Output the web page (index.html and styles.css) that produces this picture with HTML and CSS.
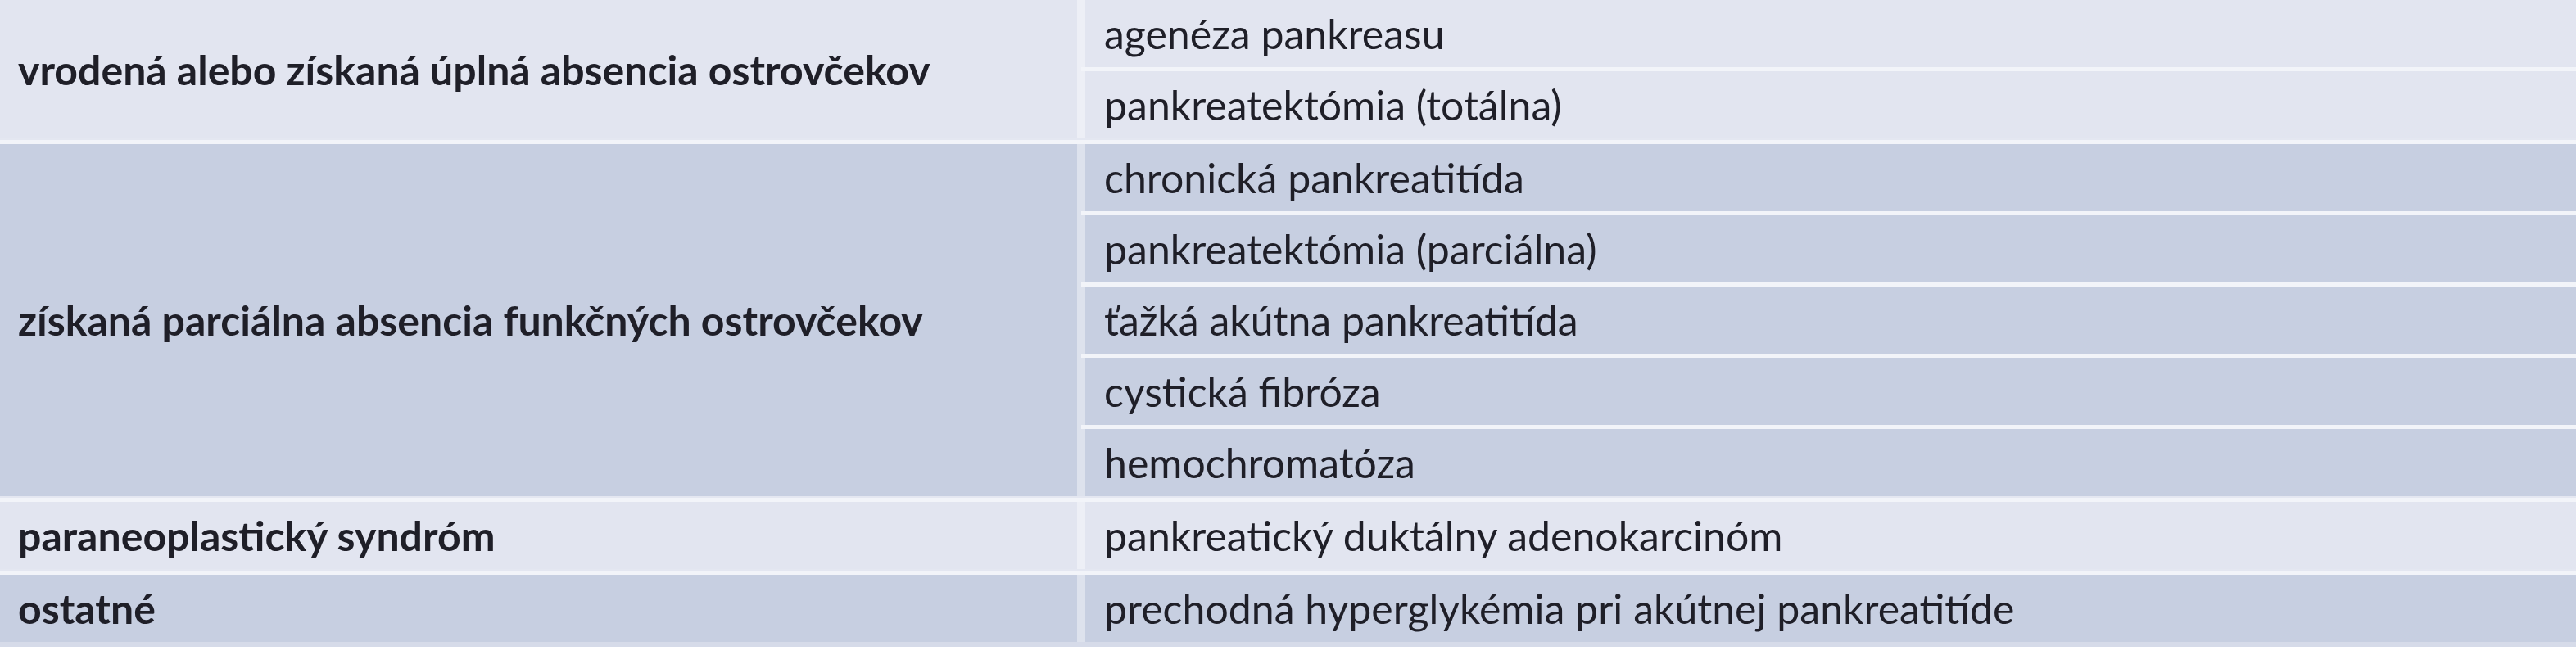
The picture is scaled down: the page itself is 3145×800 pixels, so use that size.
FILE: index.html
```html
<!DOCTYPE html>
<html lang="sk">
<head>
<meta charset="utf-8">
<title>Tabuľka</title>
<link rel="stylesheet" href="styles.css">
</head>
<body>
<div class="table">
  <div class="band light">
    <div class="term">vrodená alebo získaná úplná absencia ostrovčekov</div>
    <div class="items">
      <div class="item">agenéza pankreasu</div>
      <div class="sep"></div>
      <div class="item">pankreatektómia (totálna)</div>
    </div>
  </div>
  <div class="bandsep"></div>
  <div class="band dark">
    <div class="term">získaná parciálna absencia funkčných ostrovčekov</div>
    <div class="items">
      <div class="item">chronická pankreatitída</div>
      <div class="sep"></div>
      <div class="item">pankreatektómia (parciálna)</div>
      <div class="sep"></div>
      <div class="item">ťažká akútna pankreatitída</div>
      <div class="sep"></div>
      <div class="item">cystická fibróza</div>
      <div class="sep"></div>
      <div class="item">hemochromatóza</div>
    </div>
  </div>
  <div class="bandsep"></div>
  <div class="band light">
    <div class="term">paraneoplastický syndróm</div>
    <div class="items">
      <div class="item">pankreatický duktálny adenokarcinóm</div>
    </div>
  </div>
  <div class="bandsep"></div>
  <div class="band dark">
    <div class="term">ostatné</div>
    <div class="items">
      <div class="item">prechodná hyperglykémia pri akútnej pankreatitíde</div>
    </div>
  </div>
  <div class="bottom"></div>
</div>
</body>
</html>
```

FILE: styles.css
```css
html, body {
  margin: 0;
  padding: 0;
  background: #ffffff;
}

.table {
  width: 3145px;
  font-family: Lato, "Open Sans", "Liberation Sans", sans-serif;
  font-size: 50px;
  line-height: 1.2;
  color: #1f1f28;
}

.band {
  display: grid;
  grid-template-columns: 1320px 1fr;
}

.light {
  background: #e2e5f0;
}

.dark {
  background: #c7cfe1;
}

.term {
  display: flex;
  align-items: center;
  padding-left: 22px;
  font-weight: 700;
  border-right: 5px solid rgba(255, 255, 255, 0.4);
  box-sizing: border-box;
}

.items {
  display: flex;
  flex-direction: column;
}

.item {
  height: 82px;
  display: flex;
  align-items: center;
  padding-left: 23px;
  border-left: 5px solid rgba(255, 255, 255, 0.4);
}

.sep {
  height: 5px;
  background: #f2f4f9;
}

.bandsep {
  height: 7px;
  background: linear-gradient(#e4e7f1 0 2px, #f2f4f9 2px);
}

.bottom {
  height: 6px;
  background: #d6dbe9;
}
```
